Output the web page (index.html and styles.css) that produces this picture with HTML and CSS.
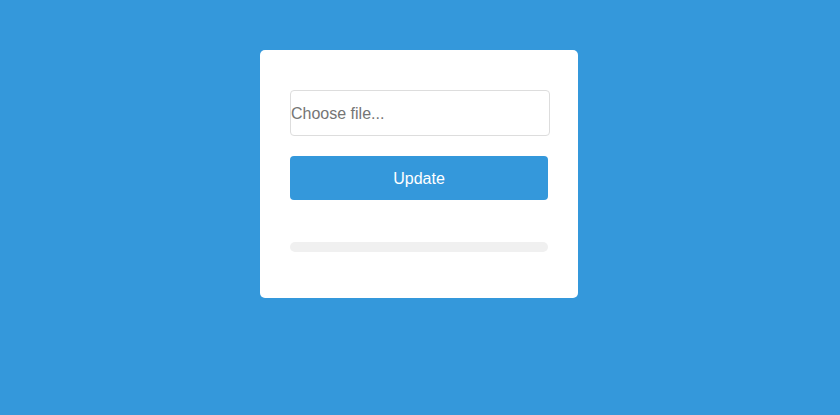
FILE: index.html
```html
<!DOCTYPE html>
<html>
<head>
<meta charset="utf-8">
<link rel="stylesheet" href="styles.css">
</head>
<body>
<div class="page">
  <div class="card">
    <div class="file-input">Choose file...</div>
    <button class="update-btn">Update</button>
    <div class="progress"><div class="progress-fill"></div></div>
  </div>
</div>
</body>
</html>
```
FILE: styles.css
```css
html, body {
  margin: 0;
  padding: 0;
  height: 100%;
  background: #3498db;
  font-family: "Liberation Sans", Arial, sans-serif;
}
.page {
  display: flex;
  justify-content: center;
  padding-top: 50px;
  padding-right: 2px;
}
.card {
  width: 258px;
  background: #fff;
  border-radius: 5px;
  padding: 40px 30px 46px 30px;
  display: flex;
  flex-direction: column;
}
.file-input {
  width: 258px;
  height: 44px;
  border: 1px solid #dddddd;
  border-radius: 4px;
  display: flex;
  align-items: center;
  padding: 1px 0 0 0;
  height: 43px;
  box-sizing: content-box;
  margin-right: -2px;
  font-size: 16px;
  color: #757575;
}
.update-btn {
  margin-top: 20px;
  height: 44px;
  width: 258px;
  border: none;
  border-radius: 4px;
  background: #3498db;
  color: #fff;
  font-family: "Liberation Sans", Arial, sans-serif;
  font-size: 16px;
  padding: 2px 0 0 0;
}
.progress {
  margin-top: 42px;
  height: 10px;
  width: 258px;
  border-radius: 5px;
  background: #f0f0f0;
  overflow: hidden;
}
.progress-fill {
  width: 0;
  height: 100%;
  background: #3498db;
}
```
